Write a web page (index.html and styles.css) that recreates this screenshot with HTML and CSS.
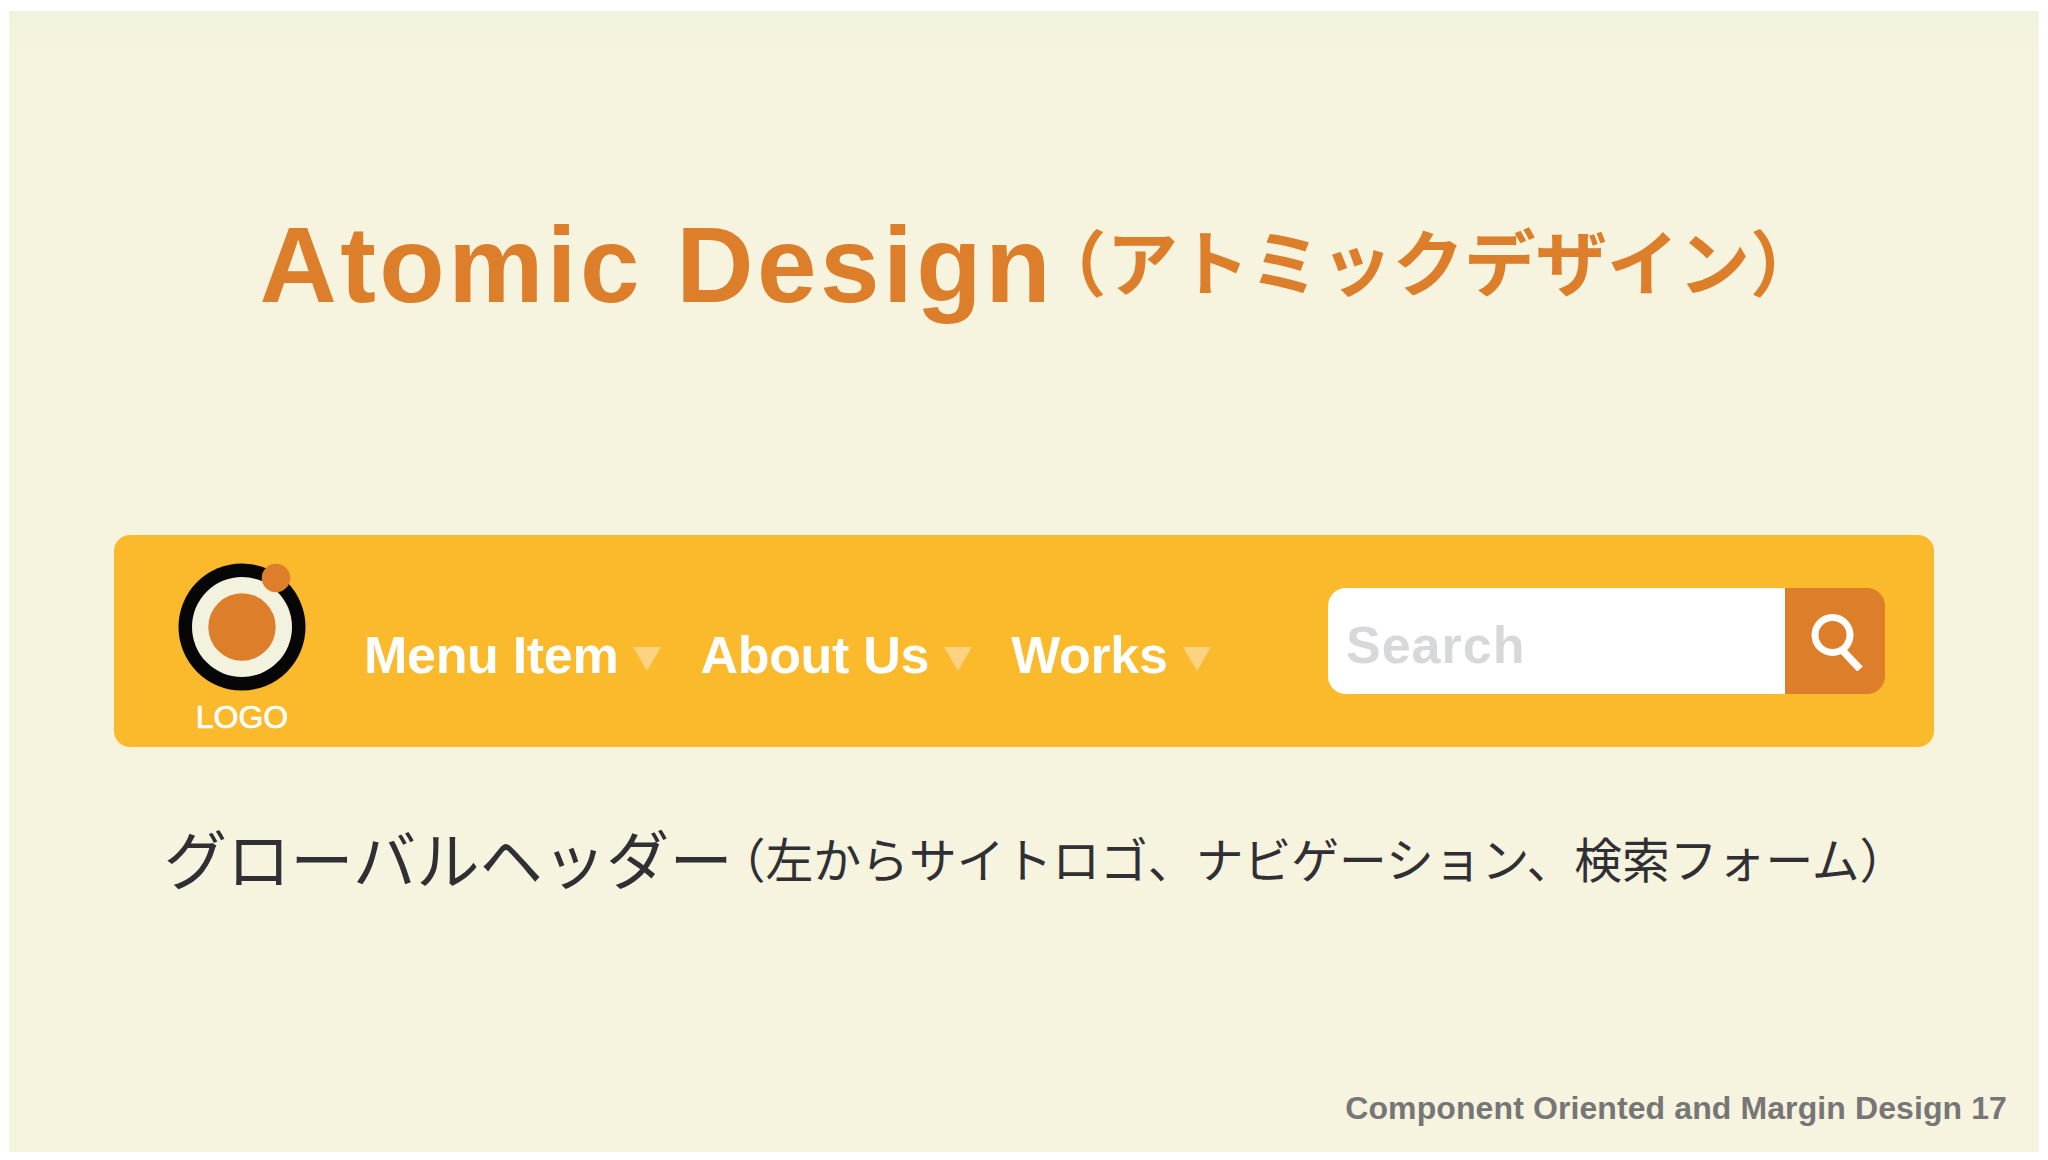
FILE: index.html
```html
<!DOCTYPE html>
<html lang="ja">
<head>
    <meta charset="UTF-8">
    <title>Atomic Design</title>
    <link rel="stylesheet" href="styles.css">
</head>
<body>
    <div class="slide">
        <h1 class="title">Atomic Design<span class="title-sub">（アトミックデザイン）</span></h1>

        <header class="site-header">
            <div class="logo">
                <svg class="logo-mark" width="136" height="128" viewBox="0 0 136 128">
                    <circle cx="68" cy="64" r="63.5" fill="#060606"/>
                    <circle cx="68" cy="64" r="50" fill="#f3f2df"/>
                    <circle cx="68" cy="64" r="33.7" fill="#dc7e2a"/>
                    <circle cx="102" cy="15" r="14.3" fill="#dc7e2a"/>
                </svg>
                <span class="logo-text">LOGO</span>
            </div>
            <nav class="nav">
                <a class="nav-item">Menu Item<i class="arrow"></i></a>
                <a class="nav-item">About Us<i class="arrow"></i></a>
                <a class="nav-item">Works<i class="arrow"></i></a>
            </nav>
            <form class="search">
                <div class="search-input">Search</div>
                <button class="search-btn" type="button">
                    <svg width="56" height="60" viewBox="0 0 56 60">
                        <circle cx="25.5" cy="24" r="17.5" fill="none" stroke="#fff" stroke-width="7"/>
                        <path d="M36 40 L53 58" stroke="#fff" stroke-width="7.5" fill="none"/>
                    </svg>
                </button>
            </form>
        </header>

        <p class="caption">グローバルヘッダー<span class="caption-sub">（左からサイトロゴ、ナビゲーション、検索フォーム）</span></p>

        <footer class="footer">Component Oriented and Margin Design 17</footer>
    </div>
</body>
</html>
```

FILE: styles.css
```css
html, body {
    margin: 0;
    background: #fff;
}
body {
    padding: 11px 9px 8px;
    font-family: "Liberation Sans", "Noto Sans CJK JP", sans-serif;
}
.slide {
    width: 2030px;
    height: 1141px;
    background: linear-gradient(#f2f3dc, #f6f3df 40px);
    display: flex;
    flex-direction: column;
    align-items: center;
}
.title {
    margin: 199px 0 0;
    padding-left: 33px;
    height: 110px;
    font-size: 107px;
    line-height: 110px;
    font-weight: 700;
    letter-spacing: 3.5px;
    color: #dc7e2a;
    white-space: nowrap;
}
.title-sub {
    margin-left: -19px;
    font-family: "Noto Sans CJK JP", sans-serif;
    font-size: 71.5px;
    line-height: 1;
    font-weight: 700;
    letter-spacing: 0;
    vertical-align: 12px;
}
.site-header {
    margin-top: 215px;
    width: 1820px;
    height: 212px;
    box-sizing: border-box;
    padding: 0 49px 0 60px;
    background: #fbb92c;
    border-radius: 16px;
    display: flex;
    align-items: flex-start;
}
.logo {
    width: 136px;
    padding-top: 28px;
    display: flex;
    flex-direction: column;
    align-items: center;
}
.logo-mark {
    display: block;
}
.logo-text {
    margin-top: 9px;
    font-size: 32px;
    line-height: 34px;
    color: #fff;
    -webkit-text-stroke: 0.7px #fff;
}
.nav {
    margin-left: 54px;
    margin-top: 90px;
    display: flex;
    gap: 39px;
}
.nav-item {
    display: flex;
    align-items: center;
    font-size: 52px;
    line-height: 60px;
    font-weight: 700;
    letter-spacing: -0.3px;
    color: #fff;
}
.arrow {
    margin-left: 15px;
    margin-top: 8px;
    width: 0;
    height: 0;
    border-left: 14px solid transparent;
    border-right: 14px solid transparent;
    border-top: 24px solid #fdd281;
}
.search {
    margin-left: auto;
    margin-top: 53px;
    display: flex;
    width: 557px;
    height: 106px;
}
.search-input {
    flex: 1;
    padding-left: 18px;
    background: #fff;
    border-radius: 18px 0 0 18px;
    font-size: 52px;
    line-height: 114px;
    font-weight: 700;
    letter-spacing: 1px;
    color: #d7d8da;
}
.search-btn {
    width: 100px;
    padding: 0;
    border: none;
    background: #dc7e2a;
    border-radius: 0 18px 18px 0;
    display: flex;
    align-items: center;
    justify-content: center;
}
.caption {
    margin: 70px 0 0;
    padding-left: 23px;
    font-family: "Noto Sans CJK JP", sans-serif;
    font-size: 63.3px;
    line-height: 80px;
    color: #303034;
    white-space: nowrap;
}
.caption-sub {
    margin-left: -15px;
    font-size: 47.8px;
    line-height: 1;
    vertical-align: 6px;
}
.footer {
    margin-top: auto;
    margin-bottom: 24px;
    align-self: flex-end;
    margin-right: 32px;
    font-size: 32px;
    line-height: 40px;
    font-weight: 700;
    letter-spacing: 0.1px;
    color: #767676;
}
```
